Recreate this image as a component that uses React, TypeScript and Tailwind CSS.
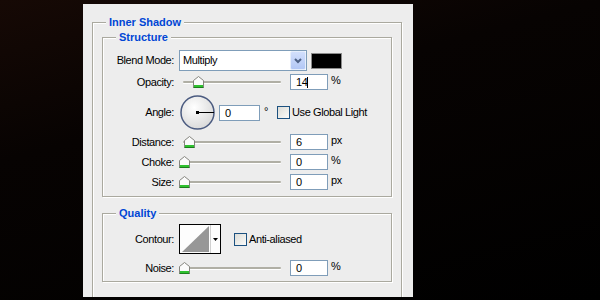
import React from "react";

function Thumb({ pos }: { pos: number }) {
  return (
    <svg
      className="absolute top-[2px]"
      style={{ left: pos - 5 }}
      width="11"
      height="12"
      viewBox="0 0 11 12"
    >
      <polygon points="0.5,4.5 5.5,0.5 10.5,4.5 10.5,11.5 0.5,11.5" fill="#fbfbfb" stroke="#85857f" />
      <rect x="1" y="9" width="9" height="2" fill="#2fc12f" />
      <line x1="0.5" y1="11.5" x2="10.5" y2="11.5" stroke="#1e7d1e" />
    </svg>
  );
}

function Slider({ pos }: { pos: number }) {
  return (
    <div className="relative w-[102px] h-[16px] ml-[5px]">
      <div className="absolute left-[4px] right-0 top-[7px] h-[2px] rounded-full bg-[#b0afa5] shadow-[0_1px_0_#fff]" />
      <Thumb pos={pos} />
    </div>
  );
}

function NumBox({ value, w = 38, caret = false }: { value: string; w?: number; caret?: boolean }) {
  return (
    <div
      className={
        (w === 38 ? "w-[38px]" : "w-[41px]") +
        " h-[16px] border border-[#7f9db9] bg-white pl-[5px] leading-[14px] flex items-center"
      }
    >
      <span>{value}</span>
      {caret && <span className="w-px h-[11px] bg-black" />}
    </div>
  );
}

function Label({ children }: { children: React.ReactNode }) {
  return <div className="w-[71px] text-right shrink-0">{children}</div>;
}

function SliderRow({ label, pos, value, unit, caret }: { label: string; pos: number; value: string; unit: string; caret?: boolean }) {
  return (
    <div className="flex items-center h-[16px] mt-[4px]">
      <Label>{label}</Label>
      <Slider pos={pos} />
      <div className="ml-[9px]">
        <NumBox value={value} caret={caret} />
      </div>
      <span className="ml-[3px] self-start leading-[13px]">{unit}</span>
    </div>
  );
}

function CheckBox() {
  return (
    <div className="w-[13px] h-[13px] border border-[#1c5180] bg-[linear-gradient(135deg,#dcdcd7,#fbfbf9)] shrink-0" />
  );
}

export default function App() {
  return (
    <div className="w-[600px] h-[300px] bg-[linear-gradient(165deg,#160905_0%,#070302_35%,#000_100%)] pt-[4px] pl-[83px] overflow-hidden font-['Liberation_Sans',Arial,sans-serif] text-[11px] tracking-[-0.4px] text-black">
      <div className="w-[330px] h-[293px] bg-[#ededed] pt-[12px] pl-[9px] pr-[11px] overflow-hidden">
        <fieldset className="border border-[#aaa99f] shadow-[inset_1px_1px_0_#fff,1px_1px_0_#fff] px-[9px] pb-[20px]">
          <legend className="ml-[4px] px-[3px] bg-[#ededed] leading-[13px] font-bold text-[#0046d5] tracking-normal">
            Inner Shadow
          </legend>

          <fieldset className="mt-[2px] border border-[#aaa99f] shadow-[inset_1px_1px_0_#fff,1px_1px_0_#fff] pt-[6px] pb-[6px]">
            <legend className="ml-[13px] px-[3px] bg-[#ededed] leading-[13px] font-bold text-[#0046d5] tracking-normal">
              Structure
            </legend>

            <div className="flex items-center h-[21px]">
              <Label>Blend Mode:</Label>
              <div className="ml-[5px] w-[128px] h-[21px] border border-[#7f9db9] bg-white flex items-center justify-between">
                <span className="pl-[3px]">Multiply</span>
                <div className="w-[16px] h-[19px] rounded-[2px] border border-[#e6eefc] bg-[linear-gradient(180deg,#d2dffc,#b2c7f5)] flex items-center justify-center">
                  <svg width="8" height="6" viewBox="0 0 8 6">
                    <polyline points="1,1 4,4 7,1" fill="none" stroke="#4d6185" strokeWidth="2" />
                  </svg>
                </div>
              </div>
              <div className="ml-[4px] w-[31px] h-[16px] bg-black border border-[#8c8c8c]" />
            </div>

            <div className="flex items-center h-[16px] mt-[3px]">
              <Label>Opacity:</Label>
              <Slider pos={19} />
              <div className="ml-[9px]">
                <NumBox value="14" caret />
              </div>
              <span className="ml-[3px] self-start leading-[13px]">%</span>
            </div>

            <div className="flex items-center h-[35px] mt-[5px]">
              <Label>Angle:</Label>
              <svg className="ml-[6px] shrink-0" width="35" height="35" viewBox="0 0 35 35">
                <defs>
                  <radialGradient id="dial" cx="40%" cy="35%" r="70%">
                    <stop offset="0%" stopColor="#ffffff" />
                    <stop offset="100%" stopColor="#d8d8d8" />
                  </radialGradient>
                </defs>
                <circle cx="17.5" cy="17.5" r="16.5" fill="url(#dial)" stroke="#4b5b80" strokeWidth="1.5" />
                <rect x="16" y="16" width="3" height="3" fill="#000" />
                <line x1="17.5" y1="17.5" x2="34" y2="17.5" stroke="#000" strokeWidth="1" />
              </svg>
              <div className="ml-[4px]">
                <NumBox value="0" w={41} />
              </div>
              <span className="ml-[4px] self-start mt-[11px] leading-[10px]">°</span>
              <div className="ml-[9px]">
                <CheckBox />
              </div>
              <span className="ml-[2px]">Use Global Light</span>
            </div>

            <SliderRow label="Distance:" pos={10} value="6" unit="px" />
            <SliderRow label="Choke:" pos={5} value="0" unit="%" />
            <SliderRow label="Size:" pos={5} value="0" unit="px" />
          </fieldset>

          <fieldset className="mt-[10px] border border-[#aaa99f] shadow-[inset_1px_1px_0_#fff,1px_1px_0_#fff] pt-[4px] pb-[5px]">
            <legend className="ml-[13px] px-[3px] bg-[#ededed] leading-[13px] font-bold text-[#0046d5] tracking-normal">
              Quality
            </legend>

            <div className="flex items-center h-[30px]">
              <Label>Contour:</Label>
              <svg className="ml-[5px] shrink-0" width="42" height="30" viewBox="0 0 42 30">
                <rect x="0.5" y="0.5" width="41" height="29" fill="#fdfdfd" stroke="#000" />
                <polygon points="3,28 30,2 30,28" fill="#979797" />
                <line x1="31.5" y1="1" x2="31.5" y2="29" stroke="#d0d0d0" />
                <polygon points="34,14 39,14 36.5,17" fill="#000" />
              </svg>
              <div className="ml-[13px]">
                <CheckBox />
              </div>
              <span className="ml-[2px]">Anti-aliased</span>
            </div>

            <div className="flex items-center h-[16px] mt-[6px]">
              <Label>Noise:</Label>
              <Slider pos={5} />
              <div className="ml-[9px]">
                <NumBox value="0" />
              </div>
              <span className="ml-[3px] self-start leading-[13px]">%</span>
            </div>
          </fieldset>
        </fieldset>
      </div>
    </div>
  );
}
